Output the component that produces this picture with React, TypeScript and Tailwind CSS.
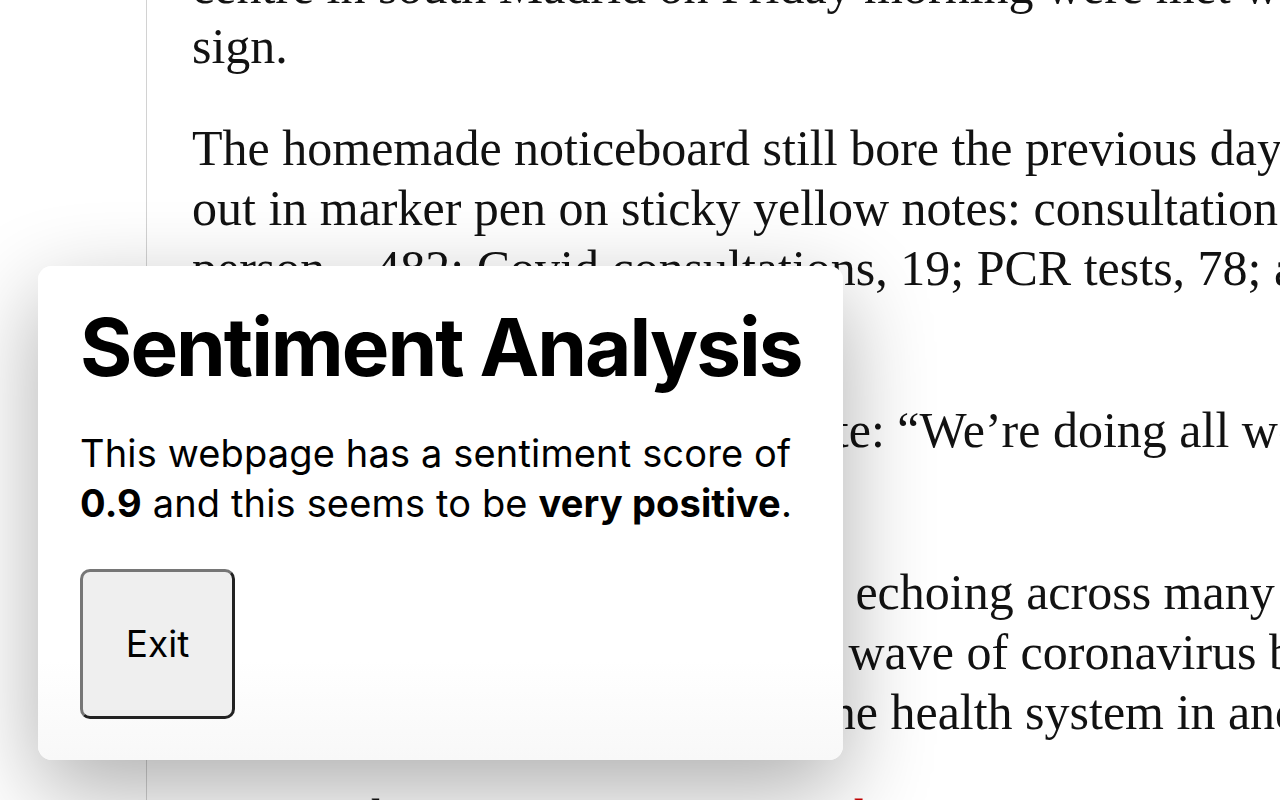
import React from 'react'

const serif = { fontFamily: '"Liberation Serif", "Times New Roman", serif' }
const sans = { fontFamily: 'Inter, "Noto Sans", "Liberation Sans", sans-serif' }

const Line: React.FC<{ children: React.ReactNode }> = ({ children }) => (
  <div className="whitespace-nowrap">{children}</div>
)

function Article() {
  return (
    <article className="mt-[-44px] text-[50px] leading-[60px] text-[#121212]" style={serif}>
      <p className="mb-[42px]">
        <Line>centre in south Madrid on Friday morning were met with a</Line>
        <Line>sign.</Line>
      </p>
      <p className="mb-[42px]">
        <Line>The homemade noticeboard still bore the previous day’s tally</Line>
        <Line>out in marker pen on sticky yellow notes: consultations in</Line>
        <Line>person – 482; Covid consultations, 19; PCR tests, 78; and</Line>
        <Line>antigen tests, 121.</Line>
      </p>
      <p className="mb-[42px]">
        <Line>Beneath it was a handwritten note: “We’re doing all we can</Line>
        <Line>to help. Please be patient.”</Line>
      </p>
      <p className="mb-[45px]">
        <Line>
          <span className="[word-spacing:1px]">It is a scene of frustration that is </span>echoing across many
        </Line>
        <Line>
          <span className="[word-spacing:1px]">parts of the country, as the sixth </span>wave of coronavirus brings
        </Line>
        <Line>infections soaring and burdens the health system in and</Line>
      </p>
      <p>
        <Line>
          Despite this surge in cases, <span className="text-[#c70000]">Covid restrictions remain</span>
        </Line>
      </p>
    </article>
  )
}

function SentimentPopup() {
  return (
    <div
      className="absolute left-[38px] top-[266px] w-[805px] rounded-[14px] bg-gradient-to-b from-white from-80% to-[#f8f8f8] pl-[42px] pr-4 pt-[41px] pb-[41px] text-black shadow-[0_30px_90px_rgba(0,0,0,0.32)]"
      style={sans}
    >
      <h1 className="whitespace-nowrap text-[80px] font-bold leading-[80px] tracking-[-2px]">Sentiment Analysis</h1>
      <p className="mt-[41px] whitespace-nowrap text-[38px] leading-[50px] tracking-[0.15px]">
        This webpage has a sentiment score of
        <br />
        <b className="font-bold">0.9</b> and this seems to be <b className="font-bold">very positive</b>.
      </p>
      <button
        className="mt-[41px] flex h-[150px] w-[155px] items-center justify-center rounded-[10px] border-[3px] border-t-[#767676] border-l-[#767676] border-r-[#222] border-b-[#222] bg-[#efefef] text-[37px]"
        style={sans}
      >
        Exit
      </button>
    </div>
  )
}

export default function App() {
  return (
    <div className="relative h-[800px] w-[1280px] overflow-hidden bg-white">
      <div className="flex h-full">
        <div className="w-[147px] shrink-0 border-r-[1.5px] border-[#d2d2d2]" />
        <div className="pl-[45px]">
          <Article />
        </div>
      </div>
      <SentimentPopup />
    </div>
  )
}
